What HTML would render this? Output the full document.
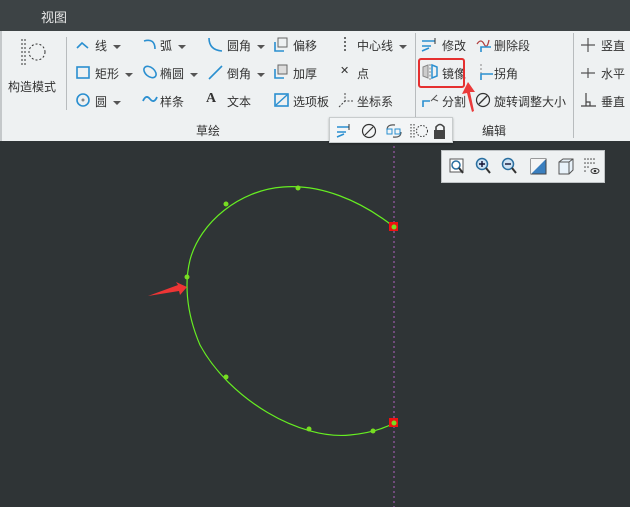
<!DOCTYPE html>
<html><head><meta charset="utf-8"><style>
*{margin:0;padding:0;box-sizing:border-box}
body{width:630px;height:507px;overflow:hidden;background:#2f3436;font-family:"Liberation Sans","Noto Sans CJK SC",sans-serif;font-size:12px;color:#2a2a2a;position:relative}
.top{position:absolute;left:0;top:0;width:630px;height:31px;background:#3d4345}
.top span{position:absolute;left:41px;top:7px;color:#e8e8e8;font-size:13px}
.rib{position:absolute;left:0;top:31px;width:630px;height:110px;background:#eef1f2;border-left:2px solid #c4c8ca}
.t{position:absolute;white-space:nowrap;font-size:12px;color:#333}
.vl{position:absolute;width:1px;background:#b8bcbe}
.dd{display:inline-block;width:0;height:0;border-left:4px solid transparent;border-right:4px solid transparent;border-top:4px solid #555;vertical-align:middle;margin-left:6px}
.ic{position:absolute}
.fl{position:absolute;left:329px;top:117px;width:124px;height:26px;background:#f3f5f6;border:1px solid #c8cccd;box-shadow:0 1px 2px rgba(0,0,0,.3)}
.vt{position:absolute;left:441px;top:150px;width:164px;height:33px;background:#eef1f2;border:1px solid #bfc3c5}
</style></head><body>
<div class="top"><span>视图</span></div>
<div class="rib"></div>
<!-- construct mode -->
<svg class="ic" style="left:18px;top:37px" width="30" height="30"><line x1="4" y1="2" x2="4" y2="28" stroke="#333" stroke-dasharray="2,2"/><line x1="7" y1="2" x2="7" y2="28" stroke="#333" stroke-dasharray="2,2"/><circle cx="19" cy="15" r="8" fill="none" stroke="#333" stroke-dasharray="2,2"/></svg>
<div class="t" style="left:8px;top:78px">构造模式</div>
<div class="vl" style="left:66px;top:37px;height:73px"></div>
<!-- col1 -->
<svg class="ic" style="left:75px;top:38px" width="16" height="14"><polyline points="2,10 7,5 13,10" fill="none" stroke="#2a8fd0" stroke-width="1.6"/></svg>
<div class="t" style="left:95px;top:37px">线<span class="dd"></span></div>
<svg class="ic" style="left:75px;top:65px" width="16" height="15"><rect x="2" y="2" width="12" height="11" fill="none" stroke="#2a8fd0" stroke-width="1.6"/></svg>
<div class="t" style="left:95px;top:65px">矩形<span class="dd"></span></div>
<svg class="ic" style="left:75px;top:92px" width="16" height="16"><circle cx="8" cy="8" r="6" fill="none" stroke="#2a8fd0" stroke-width="1.6"/><circle cx="8" cy="8" r="1.5" fill="#888"/></svg>
<div class="t" style="left:95px;top:93px">圆<span class="dd"></span></div>
<!-- col2 -->
<svg class="ic" style="left:141px;top:37px" width="18" height="16"><path d="M3 4 Q14 1 14 12" fill="none" stroke="#2a8fd0" stroke-width="1.6"/></svg>
<div class="t" style="left:160px;top:37px">弧<span class="dd"></span></div>
<svg class="ic" style="left:141px;top:64px" width="18" height="16"><ellipse cx="9" cy="8" rx="7" ry="4.5" transform="rotate(40 9 8)" fill="none" stroke="#2a8fd0" stroke-width="1.6"/></svg>
<div class="t" style="left:160px;top:65px">椭圆<span class="dd"></span></div>
<svg class="ic" style="left:141px;top:92px" width="18" height="14"><path d="M2 9 Q5 2 9 7 Q13 12 16 5" fill="none" stroke="#2a8fd0" stroke-width="1.8"/></svg>
<div class="t" style="left:160px;top:93px">样条</div>
<!-- col3 -->
<svg class="ic" style="left:207px;top:37px" width="18" height="16"><path d="M2 1 Q2 13 15 14" fill="none" stroke="#2a8fd0" stroke-width="1.6"/></svg>
<div class="t" style="left:227px;top:37px">圆角<span class="dd"></span></div>
<svg class="ic" style="left:207px;top:64px" width="18" height="16"><line x1="2" y1="15" x2="15" y2="2" stroke="#2a8fd0" stroke-width="1.6"/></svg>
<div class="t" style="left:227px;top:65px">倒角<span class="dd"></span></div>
<div class="t" style="left:206px;top:91px;font-weight:bold;font-family:'Liberation Serif',serif;font-size:14px">A</div>
<div class="t" style="left:227px;top:93px">文本</div>
<!-- col4 -->
<svg class="ic" style="left:273px;top:37px" width="16" height="16"><rect x="5" y="1" width="9" height="9" fill="none" stroke="#666"/><path d="M2 5 V14 H11" fill="none" stroke="#2a8fd0" stroke-width="1.6"/></svg>
<div class="t" style="left:293px;top:37px">偏移</div>
<svg class="ic" style="left:273px;top:64px" width="16" height="16"><rect x="5" y="1" width="9" height="9" fill="#ddd" stroke="#666"/><path d="M2 5 V14 H11" fill="none" stroke="#2a8fd0" stroke-width="1.6"/></svg>
<div class="t" style="left:293px;top:65px">加厚</div>
<svg class="ic" style="left:273px;top:92px" width="18" height="16"><rect x="2" y="2" width="13" height="12" fill="none" stroke="#2a8fd0" stroke-width="1.6"/><line x1="3" y1="13" x2="14" y2="3" stroke="#2a8fd0" stroke-width="1.4"/></svg>
<div class="t" style="left:293px;top:93px">选项板</div>
<!-- col5 -->
<svg class="ic" style="left:341px;top:36px" width="8" height="18"><line x1="4" y1="1" x2="4" y2="17" stroke="#333" stroke-width="1.4" stroke-dasharray="2,2"/></svg>
<div class="t" style="left:357px;top:37px">中心线<span class="dd"></span></div>
<div class="t" style="left:340px;top:64px;font-size:11px">✕</div>
<div class="t" style="left:357px;top:65px">点</div>
<svg class="ic" style="left:337px;top:92px" width="18" height="16"><path d="M8 1 V9 H16 M2 15 L8 9" fill="none" stroke="#444" stroke-dasharray="2,1.5"/></svg>
<div class="t" style="left:357px;top:93px">坐标系</div>
<div class="t" style="left:196px;top:122px">草绘</div>
<div class="vl" style="left:415px;top:33px;height:105px"></div>
<!-- edit -->
<svg class="ic" style="left:421px;top:37px" width="18" height="16"><path d="M1 4 H14 M1 9 H10 M1 14 L8 11" fill="none" stroke="#2a8fd0" stroke-width="1.5"/><line x1="14" y1="1" x2="14" y2="7" stroke="#333"/></svg>
<div class="t" style="left:442px;top:37px">修改</div>
<svg class="ic" style="left:475px;top:36px" width="18" height="18"><path d="M2 8 Q6 2 9 8 T14 4" fill="none" stroke="#b04040" stroke-width="1.3"/><path d="M6 16 V11 H16" fill="none" stroke="#2a8fd0" stroke-width="1.6"/></svg>
<div class="t" style="left:494px;top:37px">删除段</div>
<svg class="ic" style="left:421px;top:63px" width="18" height="18"><path d="M2 4 L7 2 V15 L2 13 Z" fill="#ccc" stroke="#888"/><path d="M11 2 L16 4 V13 L11 15 Z" fill="none" stroke="#2a8fd0" stroke-width="1.5"/><line x1="9" y1="1" x2="9" y2="17" stroke="#888" stroke-dasharray="2,1.5"/></svg>
<div class="t" style="left:442px;top:65px">镜像</div>
<svg class="ic" style="left:476px;top:63px" width="18" height="18"><line x1="5" y1="1" x2="5" y2="17" stroke="#888" stroke-dasharray="2,2"/><path d="M5 17 V11 H17" fill="none" stroke="#2a8fd0" stroke-width="1.6"/></svg>
<div class="t" style="left:494px;top:65px">拐角</div>
<svg class="ic" style="left:421px;top:91px" width="18" height="18"><path d="M2 16 V10 H9" fill="none" stroke="#2a8fd0" stroke-width="1.6"/><path d="M10 10 L16 4 M12 8 L17 10" fill="none" stroke="#555"/></svg>
<div class="t" style="left:442px;top:93px">分割</div>
<svg class="ic" style="left:475px;top:92px" width="16" height="16"><circle cx="8" cy="8" r="6.5" fill="none" stroke="#333" stroke-width="1.2"/><line x1="4" y1="12" x2="12" y2="4" stroke="#333" stroke-width="1.3"/></svg>
<div class="t" style="left:494px;top:93px">旋转调整大小</div>
<div class="t" style="left:482px;top:122px">编辑</div>
<div style="position:absolute;left:418px;top:58px;width:47px;height:30px;border:2px solid #e53030;border-radius:3px"></div>
<svg class="ic" style="left:460px;top:80px" width="30" height="40"><path d="M8 2 L2 14 L7 13 L12 32 L14 31 L10 12 L15 12 Z" fill="#ea3a3a"/></svg>
<div class="vl" style="left:573px;top:33px;height:105px"></div>
<svg class="ic" style="left:580px;top:37px" width="18" height="16"><path d="M8 1 V15 M1 8 H15" stroke="#555" stroke-width="1.2"/></svg>
<div class="t" style="left:601px;top:37px">竖直</div>
<svg class="ic" style="left:580px;top:65px" width="18" height="16"><path d="M8 3 V13 M1 8 H15" stroke="#555" stroke-width="1.2"/></svg>
<div class="t" style="left:601px;top:65px">水平</div>
<svg class="ic" style="left:580px;top:92px" width="18" height="16"><path d="M6 1 V14 M1 14 H16 M6 10 H10 V14" fill="none" stroke="#444" stroke-width="1.2"/></svg>
<div class="t" style="left:601px;top:93px">垂直</div>
<!-- canvas dashed line -->
<svg class="ic" style="left:0;top:141px" width="630" height="366"><line x1="394" y1="0" x2="394" y2="366" stroke="#b060c0" stroke-dasharray="2,3"/></svg>
<!-- floating toolbar -->
<div class="fl">
<svg style="position:absolute;left:5px;top:4px" width="110" height="18">
<path d="M2 5 H14 M2 10 H11 M2 15 L9 12" stroke="#2a8fd0" stroke-width="1.5" fill="none"/><line x1="14" y1="2" x2="14" y2="8" stroke="#333"/>
<circle cx="34" cy="9" r="6.5" fill="none" stroke="#333" stroke-width="1.2"/><line x1="30" y1="13" x2="38" y2="5" stroke="#333" stroke-width="1.2"/>
<path d="M52 8 Q52 2 60 3 M66 10 Q66 16 58 15" fill="none" stroke="#555" stroke-width="1.2"/><rect x="52" y="7" width="5" height="5" fill="none" stroke="#2a8fd0"/><rect x="60" y="7" width="5" height="5" fill="none" stroke="#2a8fd0"/>
<line x1="76" y1="2" x2="76" y2="17" stroke="#333" stroke-dasharray="1.5,1.5"/><line x1="79" y1="2" x2="79" y2="17" stroke="#333" stroke-dasharray="1.5,1.5"/><circle cx="87" cy="9" r="5.5" fill="none" stroke="#333" stroke-dasharray="1.5,1.5"/>
<path d="M101 8 V5 Q105 0 109 5 V8" fill="none" stroke="#444" stroke-width="1.6"/><rect x="99" y="8" width="12" height="9" fill="#444"/>
</svg></div>
<!-- view toolbar -->
<div class="vt">
<svg style="position:absolute;left:5px;top:5px" width="155" height="22">
<rect x="3" y="3" width="13" height="13" fill="#fff" stroke="#555"/><circle cx="9" cy="9" r="4" fill="none" stroke="#2a6fa0" stroke-width="1.5"/><line x1="12" y1="12" x2="16" y2="17" stroke="#333" stroke-width="2"/>
<circle cx="35" cy="8" r="5.5" fill="#cfe3f3" stroke="#2a6fa0" stroke-width="1.5"/><path d="M32 8 H38 M35 5 V11" stroke="#113" stroke-width="1.4"/><line x1="39" y1="12" x2="43" y2="17" stroke="#333" stroke-width="2"/>
<circle cx="61" cy="8" r="5.5" fill="#cfe3f3" stroke="#2a6fa0" stroke-width="1.5"/><path d="M58 8 H64" stroke="#113" stroke-width="1.4"/><line x1="65" y1="12" x2="69" y2="17" stroke="#333" stroke-width="2"/>
<rect x="84" y="3" width="15" height="15" fill="#3a7fbf" stroke="#444"/><path d="M84 18 L99 3 V3 H84 Z" fill="#f5f5f5"/>
<path d="M112 6 L116 3 H126 V14 L122 18 H112 Z" fill="#e8f2fa" stroke="#555"/><path d="M112 6 H122 V18 M122 6 L126 3" fill="none" stroke="#555"/>
<g fill="#444"><circle cx="138" cy="3" r=".8"/><circle cx="141" cy="3" r=".8"/><circle cx="144" cy="3" r=".8"/><circle cx="147" cy="3" r=".8"/><circle cx="138" cy="7" r=".8"/><circle cx="141" cy="7" r=".8"/><circle cx="144" cy="7" r=".8"/><circle cx="147" cy="7" r=".8"/><circle cx="138" cy="11" r=".8"/><circle cx="141" cy="11" r=".8"/><circle cx="138" cy="15" r=".8"/></g><ellipse cx="148" cy="15" rx="4" ry="2.5" fill="none" stroke="#333"/><circle cx="148" cy="15" r="1.3" fill="#333"/>
</svg></div>
<!-- curve -->
<svg class="ic" style="left:0;top:0" width="630" height="507">
<path d="M394 227 C360 200 320 184 283 187 C240 190 200 222 190 260 C185 280 185 310 200 345 C230 400 300 440 350 435 C370 433 385 428 394 423" fill="none" stroke="#66ee22" stroke-width="1.2"/>
<rect x="389" y="222" width="9" height="9" fill="#ee1111"/><rect x="389" y="418" width="9" height="9" fill="#ee1111"/>
<g fill="#77dd22"><circle cx="394" cy="227" r="2.5"/><circle cx="394" cy="423" r="2.5"/><circle cx="226" cy="204" r="2.5"/><circle cx="298" cy="188" r="2.5"/><circle cx="187" cy="277" r="2.5"/><circle cx="226" cy="377" r="2.5"/><circle cx="309" cy="429" r="2.5"/><circle cx="373" cy="431" r="2.5"/></g>
<path d="M148 296 L178 285 L176 282 L187 287 L180 295 L179 291 Z" fill="#ee3535"/>
</svg>
</body></html>
